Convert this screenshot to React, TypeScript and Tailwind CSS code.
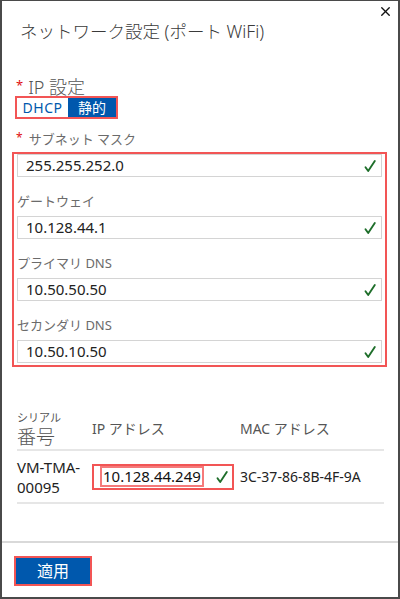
import { X } from "lucide-react";

const font = {
  fontFamily: '"Noto Sans", "Noto Sans CJK JP", sans-serif',
};

function Tick() {
  return (
    <svg viewBox="0 0 14 14" className="h-[14px] w-[14px]" fill="none">
      <path
        d="M2.5 8.2 L5.2 12 L11.8 2"
        stroke="#1e6e2a"
        strokeWidth="1.9"
        strokeLinecap="round"
        strokeLinejoin="round"
      />
    </svg>
  );
}

type TFieldProps = {
  value: string;
};

function Field({ value }: TFieldProps) {
  return (
    <div className="flex h-[23px] items-center justify-between border border-[#d4d4d4] bg-white pl-[8px] pr-[4px]">
      <span className="text-[15px] leading-none text-[#222]">{value}</span>
      <Tick />
    </div>
  );
}

function Label({ children }: { children: string }) {
  return (
    <div className="pt-[16px] pb-[7px] text-[13px] leading-[16px] text-[#6b6b6b]">
      {children}
    </div>
  );
}

export default function App() {
  return (
    <div
      style={font}
      className="relative flex h-[599px] w-[400px] flex-col border-x-2 border-t border-b-2 border-[#4a4a4a] bg-white"
    >
      <button type="button" className="absolute right-[5px] top-[3px] text-[#111]">
        <X className="h-[15px] w-[15px]" strokeWidth={2.2} />
      </button>

      <div className="flex-1 pl-[10px] pr-[11px]">
        <h1 className="pl-[8px] pt-[17px] text-[17.5px] font-light leading-[26px] text-[#3a3a3a]">
          ネットワーク設定 (ポート WiFi)
        </h1>

        <div className="mt-[34px] flex items-start pl-[4px]">
          <span className="mr-[5px] mt-[1px] text-[13px] leading-none text-[#e01010]">*</span>
          <span className="text-[18px] font-light leading-[18px] text-[#555]">IP 設定</span>
        </div>
        <div className="ml-[3px] mt-0 flex w-fit border-2 border-[#f25555]">
          <span className="flex h-[19px] w-[51px] items-center justify-center bg-white text-[14px] tracking-[0.5px] text-[#0058ad]">
            DHCP
          </span>
          <span className="flex h-[19px] w-[48px] items-center justify-center bg-[#0058ad] text-[14px] text-white">
            静的
          </span>
        </div>

        <div className="mt-[13px] flex items-start pl-[4px]">
          <span className="mr-[6px] text-[12px] leading-none text-[#e01010]">*</span>
          <span className="text-[13px] leading-[15px] text-[#6b6b6b]">サブネット マスク</span>
        </div>

        <div className="mt-[5px] border-2 border-[#f25555] px-[3px] pb-[2px] pt-[0px]">
          <Field value="255.255.252.0" />
          <Label>ゲートウェイ</Label>
          <Field value="10.128.44.1" />
          <Label>プライマリ DNS</Label>
          <Field value="10.50.50.50" />
          <Label>セカンダリ DNS</Label>
          <Field value="10.50.10.50" />
        </div>

        <div className="mt-[44px] pl-[5px] pr-[3px]">
          <div className="flex items-end border-b-2 border-[#e6e6e6]">
            <div className="flex w-[75px] flex-col">
              <span className="text-[11px] leading-[14px] text-[#555]">シリアル</span>
              <span className="text-[19px] font-light leading-[24px] text-[#555]">番号</span>
            </div>
            <span className="mb-[12px] w-[148px] text-[14px] leading-[16px] text-[#555]">IP アドレス</span>
            <span className="mb-[12px] text-[14px] leading-[16px] text-[#555]">MAC アドレス</span>
          </div>
          <div className="flex h-[53px] items-center border-b-2 border-[#e6e6e6]">
            <div className="flex w-[75px] flex-col text-[15px] leading-[20px] text-[#222]">
              <span>VM-TMA-</span>
              <span>00095</span>
            </div>
            <div className="flex h-[26px] w-[142px] items-center justify-between border-2 border-[#f25555] pl-[6px] pr-[3px]">
              <span className="border-2 border-[#f57a7a] px-[1px] text-[15px] leading-[17px] text-[#111]">
                10.128.44.249
              </span>
              <Tick />
            </div>
            <span className="ml-[6px] text-[14px] text-[#222]">3C-37-86-8B-4F-9A</span>
          </div>
        </div>
      </div>

      <div className="h-[56px] border-t-2 border-[#d9d9d9] pl-[12px] pt-[13px]">
        <button
          type="button"
          className="flex h-[30px] w-[78px] items-center justify-center border-2 border-[#f25555] bg-[#0058ad] text-[16px] text-white"
        >
          適用
        </button>
      </div>
    </div>
  );
}
